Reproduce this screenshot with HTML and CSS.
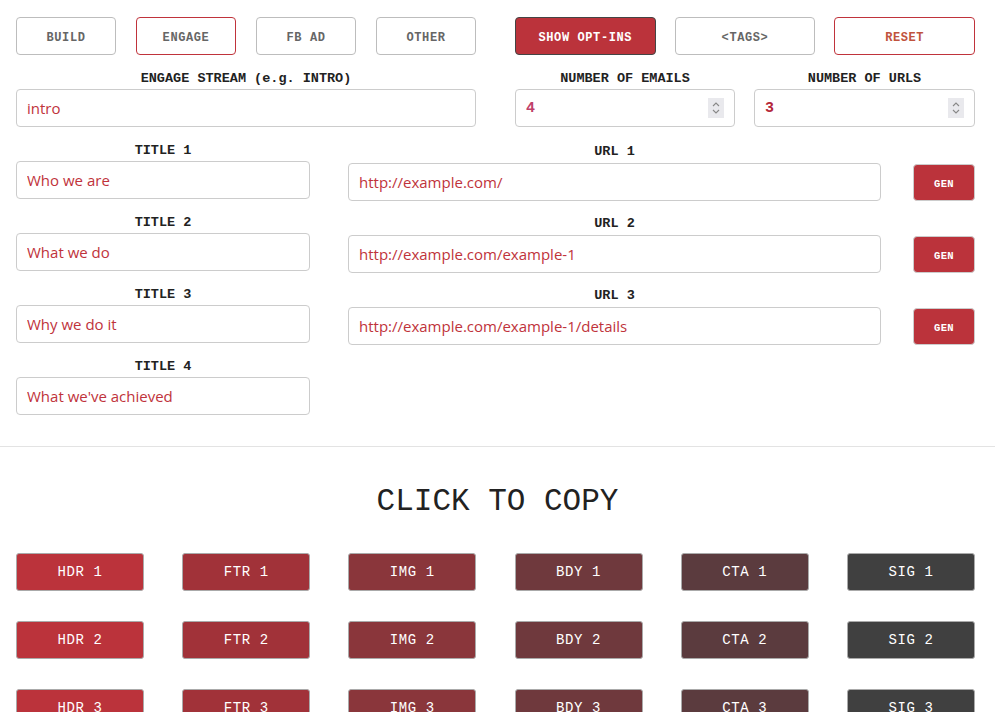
FILE: index.html
```html
<!DOCTYPE html>
<html>
<head>
<meta charset="utf-8">
<link rel="stylesheet" href="styles.css">
</head>
<body>
<div class="top">
  <div class="half">
    <div class="tabs4">
      <button class="btn">BUILD</button>
      <button class="btn active">ENGAGE</button>
      <button class="btn">FB AD</button>
      <button class="btn">OTHER</button>
    </div>
    <div class="field">
      <label class="lbl">ENGAGE STREAM (e.g. INTRO)</label>
      <input class="inp" type="text" value="intro">
    </div>
  </div>
  <div class="half">
    <div class="tabs3">
      <button class="btn primary">SHOW OPT-INS</button>
      <button class="btn">&lt;TAGS&gt;</button>
      <button class="btn danger">RESET</button>
    </div>
    <div class="nums">
      <div class="field">
        <label class="lbl">NUMBER OF EMAILS</label>
        <div class="numwrap">
          <input class="inp num pink" type="text" value="4">
          <span class="spin"><svg width="10" height="14" viewBox="0 0 10 14"><path d="M2 5 L5 2 L8 5 M2 9 L5 12 L8 9" fill="none" stroke="#888" stroke-width="1.1"/></svg></span>
        </div>
      </div>
      <div class="field">
        <label class="lbl">NUMBER OF URLS</label>
        <div class="numwrap">
          <input class="inp num" type="text" value="3">
          <span class="spin"><svg width="10" height="14" viewBox="0 0 10 14"><path d="M2 5 L5 2 L8 5 M2 9 L5 12 L8 9" fill="none" stroke="#888" stroke-width="1.1"/></svg></span>
        </div>
      </div>
    </div>
  </div>
</div>

<div class="rows">
  <div class="titles">
    <div class="field"><label class="lbl">TITLE 1</label><input class="inp" type="text" value="Who we are"></div>
    <div class="field"><label class="lbl">TITLE 2</label><input class="inp" type="text" value="What we do"></div>
    <div class="field"><label class="lbl">TITLE 3</label><input class="inp" type="text" value="Why we do it"></div>
    <div class="field"><label class="lbl">TITLE 4</label><input class="inp" type="text" value="What we've achieved"></div>
  </div>
  <div class="urls">
    <div class="urlrow"><div class="field"><label class="lbl">URL 1</label><input class="inp" type="text" value="http://example.com/"></div><button class="btn primary gen">GEN</button></div>
    <div class="urlrow"><div class="field"><label class="lbl">URL 2</label><input class="inp" type="text" value="http://example.com/example-1"></div><button class="btn primary gen">GEN</button></div>
    <div class="urlrow"><div class="field"><label class="lbl">URL 3</label><input class="inp" type="text" value="http://example.com/example-1/details"></div><button class="btn primary gen">GEN</button></div>
  </div>
</div>

<hr class="rule">

<h1 class="heading">CLICK TO COPY</h1>

<div class="copygrid">
  <button class="cbtn c1">HDR 1</button><button class="cbtn c2">FTR 1</button><button class="cbtn c3">IMG 1</button><button class="cbtn c4">BDY 1</button><button class="cbtn c5">CTA 1</button><button class="cbtn c6">SIG 1</button>
  <button class="cbtn c1">HDR 2</button><button class="cbtn c2">FTR 2</button><button class="cbtn c3">IMG 2</button><button class="cbtn c4">BDY 2</button><button class="cbtn c5">CTA 2</button><button class="cbtn c6">SIG 2</button>
  <button class="cbtn c1">HDR 3</button><button class="cbtn c2">FTR 3</button><button class="cbtn c3">IMG 3</button><button class="cbtn c4">BDY 3</button><button class="cbtn c5">CTA 3</button><button class="cbtn c6">SIG 3</button>
</div>
</body>
</html>
```
FILE: styles.css
```css
* { box-sizing: border-box; }
html, body { margin: 0; padding: 0; background: #fff; }
body {
  font-family: "Liberation Mono", "DejaVu Sans Mono", monospace;
  color: #222;
  overflow: hidden;
}
.top {
  display: grid;
  grid-template-columns: 460px 460px;
  column-gap: 39px;
  padding: 17px 0 0 16px;
}
.tabs4 {
  display: grid;
  grid-template-columns: repeat(4, 1fr);
  column-gap: 20px;
}
.tabs3 {
  display: grid;
  grid-template-columns: repeat(3, 1fr);
  column-gap: 19px;
}
.btn {
  height: 38px;
  border: 1px solid #bdbdbd;
  border-radius: 4px;
  background: #fff;
  color: #666;
  font-family: "Liberation Mono", "DejaVu Sans Mono", monospace;
  font-weight: bold;
  font-size: 12px;
  letter-spacing: 0.6px;
  padding: 4px 0 0;
  cursor: pointer;
}
.btn.active { border-color: #c0333b; }
.btn.primary { background: #bb333b; border-color: #444; color: #fff; }
.btn.danger { border-color: #c0333b; color: #c0533d; }
.field { display: flex; flex-direction: column; }
.lbl {
  display: block;
  text-align: center;
  font-weight: bold;
  font-size: 13.5px;
  line-height: 16px;
  color: #222;
  margin: 16px 0 2px;
}
.inp {
  height: 38px;
  width: 100%;
  border: 1px solid #ccc;
  border-radius: 4px;
  padding: 0 10px;
  font-family: "Open Sans", "Liberation Sans", sans-serif;
  font-size: 15px;
  color: #c0333b;
  background: #fff;
  outline: none;
}
.nums {
  display: grid;
  grid-template-columns: 220px 221px;
  column-gap: 19px;
}
.numwrap { position: relative; }
.inp.num {
  font-family: "Liberation Mono", "DejaVu Sans Mono", monospace;
  font-weight: bold;
  font-size: 15px;
  color: #b5283a;
}
.inp.num.pink { color: #c0406a; }
.spin {
  position: absolute;
  right: 11px;
  top: 9px;
  width: 16px;
  height: 20px;
  background: #e9e9ed;
  display: flex;
  align-items: center;
  justify-content: center;
}
.rows {
  display: grid;
  grid-template-columns: 294px 627px;
  column-gap: 38px;
  padding-left: 16px;
  margin-top: 1px;
}
.titles .field:first-child .lbl { margin-top: 15px; }
.titles .field + .field .lbl { margin-top: 16px; }
.urlrow {
  display: grid;
  grid-template-columns: 533px 62px;
  column-gap: 32px;
  align-items: end;
}
.urls .urlrow:first-child .lbl { margin-top: 16px; margin-bottom: 3px; }
.urls .urlrow + .urlrow .lbl { margin-top: 15px; margin-bottom: 3px; }
.btn.gen {
  height: 37px;
  font-size: 10.5px;
  border-color: #ccc;
  letter-spacing: 0.3px;
  padding: 2px 0 0;
}
.rule {
  border: 0;
  border-top: 1px solid #e3e3e3;
  margin: 31px 0 0;
}
.heading {
  text-align: center;
  font-weight: normal;
  font-size: 31px;
  line-height: 40px;
  margin: 35px 0 0;
  color: #222;
  letter-spacing: 0;
}
.copygrid {
  display: grid;
  grid-template-columns: repeat(6, 128px);
  column-gap: 38.2px;
  row-gap: 30px;
  padding-left: 16px;
  margin-top: 31px;
}
.cbtn {
  height: 38px;
  border: 1px solid #aaa;
  border-radius: 3px;
  color: #fff;
  font-family: "Liberation Mono", "DejaVu Sans Mono", monospace;
  font-size: 14px;
  letter-spacing: 0.6px;
  padding: 0;
}
.c1 { background: #bb333b; }
.c2 { background: #a13239; }
.c3 { background: #8a363b; }
.c4 { background: #6f393d; }
.c5 { background: #5b3b3e; }
.c6 { background: #404040; }
```
